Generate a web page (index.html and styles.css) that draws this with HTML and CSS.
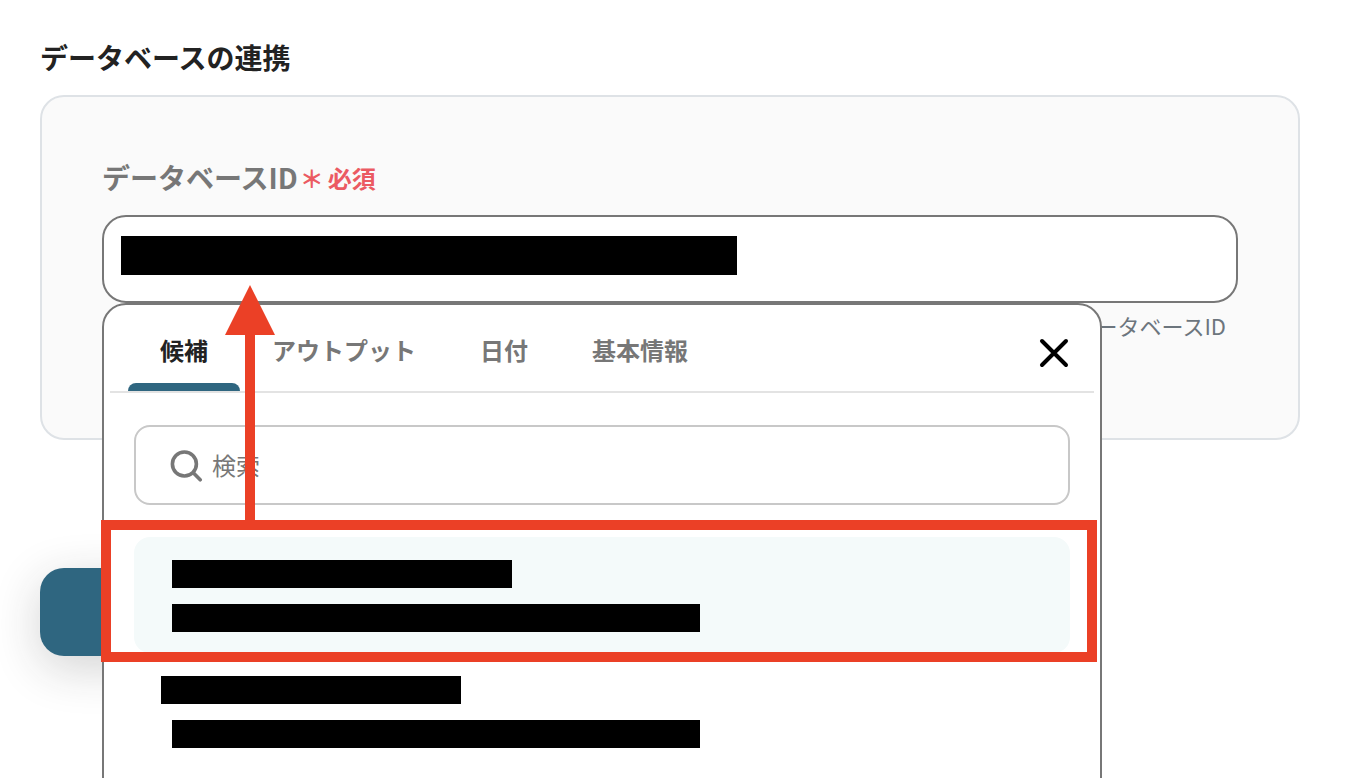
FILE: index.html
```html
<!DOCTYPE html>
<html lang="ja">
<head>
  <meta charset="UTF-8" />
  <meta name="viewport" content="width=device-width, initial-scale=1.0"/>
  <title>データベースの連携</title>
  <link rel="stylesheet" href="styles.css">
</head>
<body>

  <h1>データベースの連携</h1>

  <div class="card">
    <div class="label-row">
      <label for="databaseId">データベースID</label>
      <span class="required"><span>＊</span><span>必須</span></span>
    </div>

    <div class="field">
      <input type="text" id="databaseId" class="field-input" required />
      <span class="mask mask-value"></span>

      <div class="popup">
        <div class="popup-header">
          <div class="tabs">
            <button type="button" class="tab active">候補</button>
            <button type="button" class="tab">アウトプット</button>
            <button type="button" class="tab">日付</button>
            <button type="button" class="tab">基本情報</button>
          </div>
          <button type="button" class="close-btn" aria-label="閉じる">
            <svg width="32" height="32" viewBox="0 0 32 32" fill="none" stroke="#000" stroke-width="4" stroke-linecap="round">
              <path d="M4 4L28 28M28 4L4 28" />
            </svg>
          </button>
        </div>

        <div class="popup-body">
          <div class="search">
            <svg width="34" height="34" viewBox="0 0 34 34" fill="none" stroke="#777" stroke-width="3.6" stroke-linecap="round">
              <circle cx="14.4" cy="16" r="12" />
              <path d="M23.5 25L30.2 31.8" />
            </svg>
            <input type="text" placeholder="検索" aria-label="検索" />
          </div>

          <ul class="options">
            <li class="option selected">
              <span class="mask mask-name"></span>
              <span class="mask mask-id"></span>
              <!-- 選択箇所を示す枠と矢印 -->
              <div class="callout">
                <svg class="callout-arrow" width="50" height="245" viewBox="0 0 50 245" fill="#eb4026">
                  <path d="M25 0L50 50H30V245H20V50H0Z" />
                </svg>
              </div>
            </li>
            <li class="option">
              <span class="mask mask-short"></span>
              <span class="mask mask-id"></span>
            </li>
          </ul>
        </div>
      </div>
    </div>

    <p class="help">データベースID</p>
  </div>

  <button type="button" class="submit-btn" aria-label="次へ"></button>

</body>
</html>
```

FILE: styles.css
```css
* {
  box-sizing: border-box;
}

body {
  margin: 0;
  height: 100vh;
  padding: 36px 58px 0 40px;
  overflow: hidden;
  background-color: #fff;
  color: #222;
  font-family: "Noto Sans CJK JP", sans-serif;
}

button, input {
  font-family: inherit;
}

h1 {
  margin: 0 0 17px;
  font-size: 28px;
  line-height: 42px;
  font-weight: 700;
}

.card {
  padding: 59px 60px 60px;
  border: 2px solid #dee2e6;
  border-radius: 24px;
  background-color: #fafafa;
}

.label-row {
  display: flex;
  align-items: center;
  gap: 2px;
  margin-bottom: 17px;
  color: #777;
  font-size: 28px;
  line-height: 42px;
  font-weight: 700;
}

.required {
  display: flex;
  gap: 4px;
  padding-top: 2px;
  color: #eb5a62;
  font-size: 24px;
  line-height: 40px;
}

.field {
  position: relative;
}

.field-input {
  display: block;
  width: 100%;
  height: 88px;
  padding: 0 18px;
  border: 2px solid #777;
  border-radius: 24px;
  background-color: #fff;
  font-size: 28px;
}

.mask {
  display: block;
  height: 28px;
  background-color: #000;
}

.mask-value {
  position: absolute;
  top: 21px;
  left: 19px;
  width: 616px;
  height: 39px;
}

.help {
  min-height: 69px;
  margin: 6px 12px 0 0;
  color: #6c757d;
  font-size: 22px;
  line-height: 33px;
  text-align: right;
}

.popup {
  position: absolute;
  z-index: 10;
  top: 100%;
  left: 0;
  width: 100%;
  max-width: 1000px;
  min-height: 100vh;
  border: 2px solid #777;
  border-radius: 24px;
  background-color: #fff;
}

.popup-header {
  display: flex;
  justify-content: space-between;
  align-items: center;
  margin: 0 6px;
  padding: 0 24px 0 18px;
  border-bottom: 2px solid #e3e3e3;
}

.tabs {
  display: flex;
}

.tab {
  position: relative;
  height: 86px;
  padding: 4px 32px 0;
  border: none;
  background: none;
  color: #777;
  font-size: 24px;
  line-height: 36px;
  font-weight: 700;
  cursor: pointer;
}

.tab.active {
  color: #222;
}

.tab.active::after {
  content: "";
  position: absolute;
  left: 0;
  right: 0;
  bottom: 0;
  height: 8px;
  border-radius: 8px 8px 0 0;
  background-color: #2f6680;
}

.close-btn {
  display: flex;
  padding: 10px 0 0;
  border: none;
  background: none;
  cursor: pointer;
}

.popup-body {
  padding: 32px 30px;
}

.search {
  display: flex;
  align-items: center;
  gap: 8px;
  height: 80px;
  padding: 0 34px;
  border: 2px solid #c8c8c8;
  border-radius: 16px;
}

.search input {
  flex: 1;
  padding: 0;
  border: none;
  outline: none;
  font-size: 24px;
  line-height: 36px;
}

.search input::placeholder {
  color: #777;
}

.options {
  margin: 32px 0 0;
  padding: 0;
  list-style: none;
}

.option {
  position: relative;
  display: flex;
  flex-direction: column;
  gap: 16px;
  padding: 23px 38px 21px;
  border-radius: 16px;
}

.option.selected {
  background-color: #f4fafa;
}

.mask-name {
  width: 340px;
}

.mask-id {
  width: 528px;
}

.mask-short {
  width: 300px;
  margin-left: -11px;
}

.callout {
  position: absolute;
  top: -17px;
  right: -27px;
  bottom: -9px;
  left: -33px;
  border: 10px solid #eb4026;
}

.callout-arrow {
  position: absolute;
  bottom: 100%;
  left: 114px;
}

.submit-btn {
  display: block;
  width: 50%;
  height: 88px;
  margin-top: 128px;
  border: none;
  border-radius: 24px;
  background-color: #2f6680;
  box-shadow: 0 12px 48px rgba(34, 34, 34, 0.2);
  cursor: pointer;
}
```
